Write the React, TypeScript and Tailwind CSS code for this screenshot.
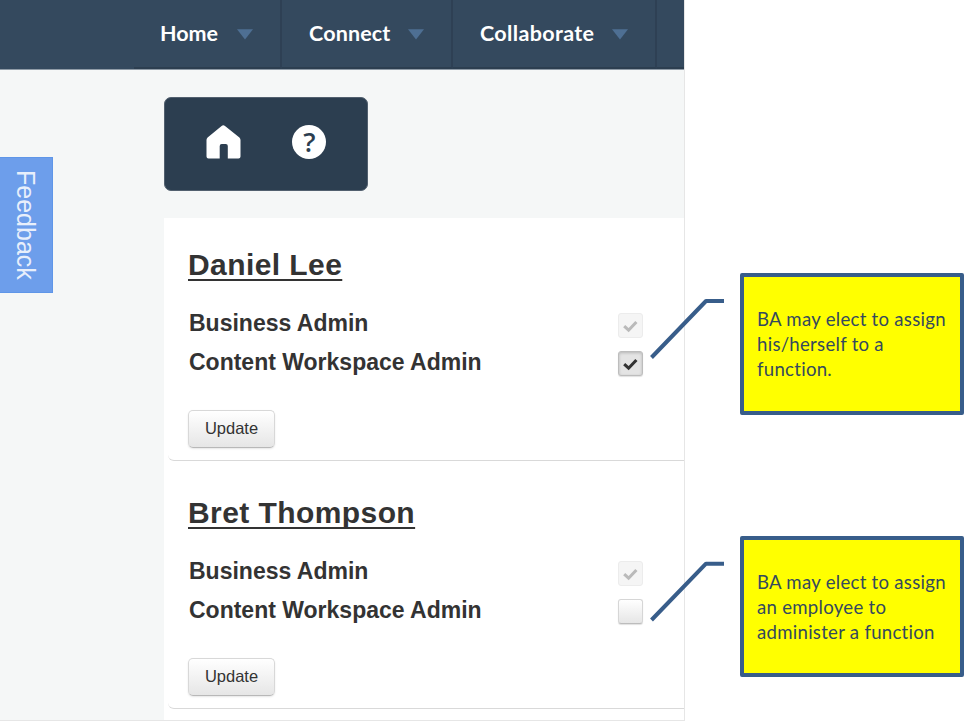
function Caret() {
  return (
    <svg className="block h-[11px] w-4" viewBox="0 0 16 11">
      <path d="M0 0.3H16L8 10.5Z" fill="#4e6f93" />
    </svg>
  );
}

function NavItem({ label, className }: { label: string; className: string }) {
  return (
    <div
      className={`flex h-[69px] shrink-0 items-start border-r-2 border-b-2 border-r-[#2e4054] border-b-[#2c3e50] ${className}`}
    >
      <span className="mt-[18px] block text-[21.5px] leading-[30px] font-bold text-white">{label}</span>
      <span className="mt-[29px] ml-auto">
        <Caret />
      </span>
    </div>
  );
}

function Check({ state }: { state: "disabled" | "checked" | "empty" }) {
  const look =
    state === "disabled"
      ? "border-[#ececec] bg-[#f5f5f5]"
      : state === "checked"
        ? "border-[#bdbdbd] bg-[#e4e4e4] shadow-[inset_0_1px_3px_rgba(0,0,0,0.2),0_1px_1px_rgba(0,0,0,0.12)]"
        : "border-[#d6d6d6] border-b-[#bcbcbc] bg-linear-to-b from-white to-[#e6e6e6] shadow-[0_1px_1px_rgba(0,0,0,0.12)]";
  return (
    <span className={`flex h-[25px] w-[25px] items-center justify-center rounded-[3px] border ${look}`}>
      {state !== "empty" && (
        <svg className="h-[15px] w-[17px]" viewBox="0 0 17 15">
          <path
            d="M2.2 8.2L6.6 12.2L14.4 4"
            fill="none"
            stroke={state === "checked" ? "#333333" : "#bababa"}
            strokeWidth="3.1"
          />
        </svg>
      )}
    </span>
  );
}

function Member({ name, granted }: { name: string; granted: boolean }) {
  return (
    <section className="ml-1 h-[248px] shrink-0 pl-5 pt-[27px]">
      <h2 className="text-[30px] leading-10 font-bold tracking-[0.42px] whitespace-nowrap text-[#333333]">
        <span className="underline decoration-2 underline-offset-[4px] [text-decoration-skip-ink:none]">{name}</span>
      </h2>
      <div className="mt-[19px] flex h-[38px] items-start pl-px">
        <span className="w-[429px] text-[23px] leading-[38px] font-bold text-[#333333]">Business Admin</span>
        <span className="mt-[9px]">
          <Check state="disabled" />
        </span>
      </div>
      <div className="flex h-[39px] items-start pl-px">
        <span className="w-[429px] text-[23px] leading-[40px] font-bold text-[#333333]">
          Content Workspace Admin
        </span>
        <span className="mt-[9px]">
          <Check state={granted ? "checked" : "empty"} />
        </span>
      </div>
      <button className="mt-[29px] flex h-[38px] w-[87px] items-center justify-center rounded-[5px] border border-[#d8d8d8] border-b-[#b8b8b8] bg-linear-to-b from-white to-[#e6e6e6] pb-px text-[16.5px] text-[#333333] shadow-[0_1px_2px_rgba(0,0,0,0.1)]">
        Update
      </button>
      <div className="-ml-5 mt-1 h-[9px] rounded-bl-[6px] border-b border-[#d9d9d9]" />
    </section>
  );
}

function Callout({ lines, className }: { lines: string[]; className: string }) {
  return (
    <div
      className={`flex w-[224px] flex-col justify-center rounded-[2px] border-4 border-[#385d8a] bg-[#ffff00] pl-[13px] font-['Lato',sans-serif] text-[18.6px] leading-[25px] tracking-[0.27px] whitespace-nowrap text-[#34495e] [font-variant-ligatures:none] ${className}`}
    >
      {lines.map((line) => (
        <span key={line}>{line}</span>
      ))}
    </div>
  );
}

export default function App() {
  return (
    <div className="relative flex h-[721px] w-[964px] overflow-hidden bg-white font-['Liberation_Sans',Arial,sans-serif]">
      <main className="flex w-[685px] flex-col overflow-hidden border-r border-b border-[#e6e6e6] bg-[#f5f7f7]">
        <nav className="flex h-[70px] shrink-0 overflow-hidden border-b border-[#8f9ba7] bg-[#34495e] pl-[134px] font-['Lato',sans-serif]">
          <NavItem label="Home" className="w-[148px] pl-[26px] pr-[27px]" />
          <NavItem label="Connect" className="w-[171px] pl-[27px] pr-[27px] tracking-[0.15px]" />
          <NavItem label="Collaborate" className="w-[204px] pl-[27px] pr-[27px] tracking-[0.35px]" />
          <div className="h-[69px] flex-1 border-b-2 border-[#2c3e50]" />
        </nav>
        <div className="flex min-h-0 flex-1">
          <aside className="w-[164px] shrink-0 pt-[87px]">
            <div className="flex h-[136px] w-[53px] items-center justify-center border border-l-0 border-[#5f96e8] bg-[#6d9eeb]">
              <span className="text-[25px] leading-[30px] text-[#e8effb] [writing-mode:vertical-rl]">Feedback</span>
            </div>
          </aside>
          <div className="flex min-w-0 flex-1 flex-col pt-[27px]">
            <div className="flex h-[94px] w-[204px] shrink-0 rounded-[7px] border border-[#52606f] bg-[#2c3e50] pt-[27px] pl-[41px]">
              <svg className="h-[35px] w-[35px]" viewBox="0 0 35 35">
                <path
                  d="M15.6 0.9Q17.3 -0.5 19 0.9L33.4 12.5Q34.5 13.5 34.5 15V31.5Q34.5 33.5 32.5 33.5H21.8V21Q21.8 19 19.8 19H15.7Q13.7 19 13.7 21V33.5H2.5Q0.5 33.5 0.5 31.5V15Q0.5 13.5 1.6 12.5Z"
                  fill="white"
                />
              </svg>
              <div className="ml-[51px] flex h-[34px] w-[34px] items-center justify-center rounded-full bg-white pl-px font-['Open_Sans',sans-serif] text-[27px] leading-[34px] font-semibold text-[#2c3e50]">
                ?
              </div>
            </div>
            <div className="mt-[27px] flex flex-1 flex-col overflow-hidden bg-white">
              <Member name="Daniel Lee" granted />
              <Member name="Bret Thompson" granted={false} />
            </div>
          </div>
        </div>
      </main>
      <aside className="ml-[55px] flex flex-col pt-[273px]">
        <Callout className="h-[142px]" lines={["BA may elect to assign", "his/herself to a", "function."]} />
        <Callout
          className="mt-[121px] h-[141px] pt-px"
          lines={["BA may elect to assign", "an employee to", "administer a function"]}
        />
      </aside>
      <svg className="pointer-events-none absolute inset-0 h-[721px] w-[964px]" viewBox="0 0 964 721">
        <g fill="none" stroke="#385d8a" strokeWidth="4" strokeLinejoin="round">
          <path d="M651.5 357.5L706 301H724" />
          <path d="M651.5 620L706 563.7H724" />
        </g>
      </svg>
    </div>
  );
}
